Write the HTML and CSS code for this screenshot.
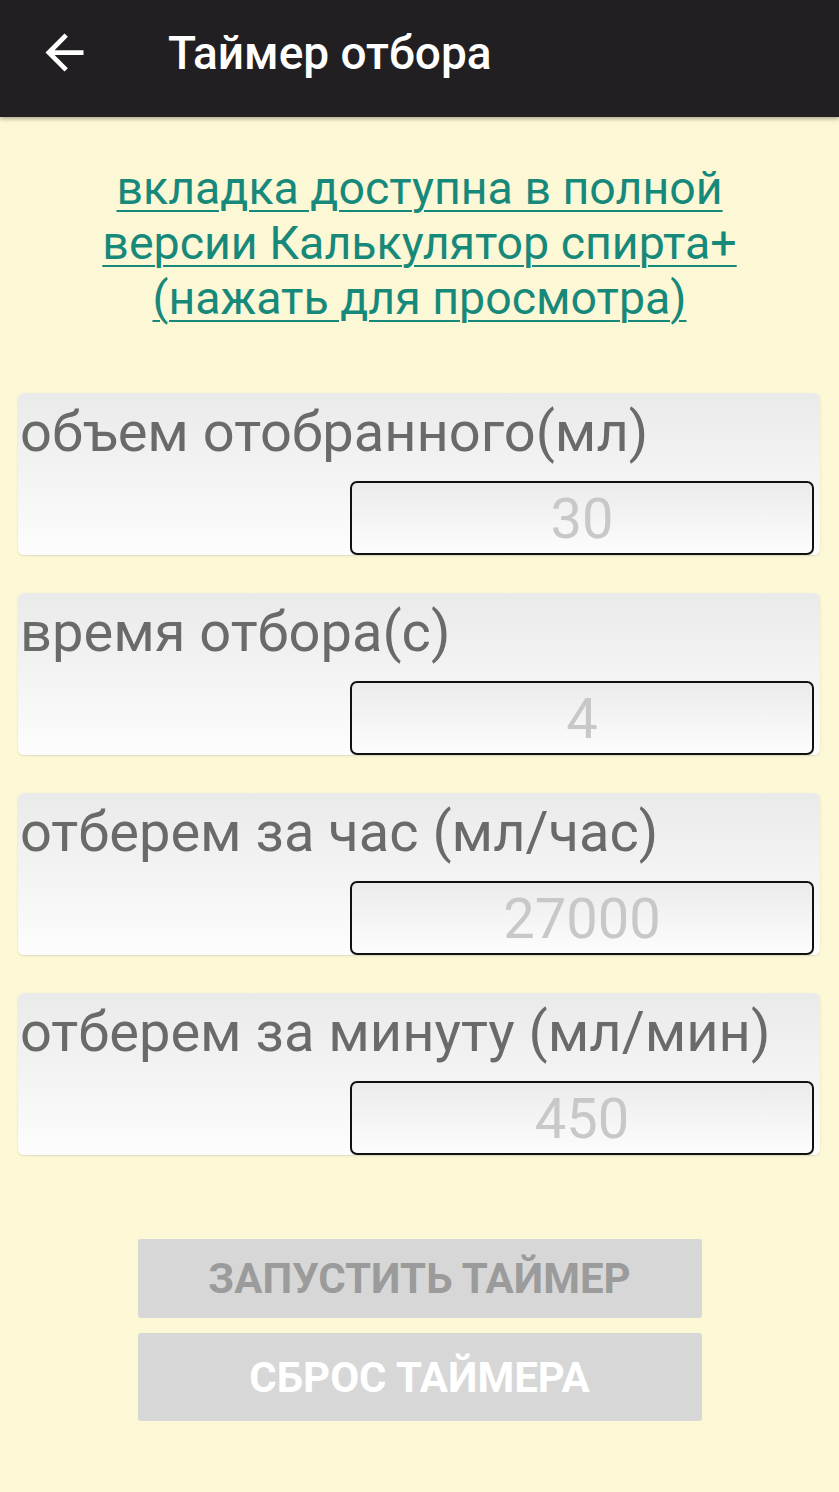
FILE: index.html
```html
<!DOCTYPE html>
<html lang="ru">
<head>
  <meta charset="UTF-8">
  <title>Таймер отбора</title>
  <meta name="viewport" content="width=device-width, initial-scale=1.0">
  <link rel="stylesheet" href="styles.css">
</head>
<body>
  <!-- Верхняя панель -->
  <header class="toolbar">
    <svg class="back" viewBox="0 0 24 24" width="57" height="57">
      <path d="M20 11H7.83l5.59-5.59L12 4l-8 8 8 8 1.41-1.41L7.83 13H20v-2z" fill="#fff"/>
    </svg>
    <h1>Таймер отбора</h1>
  </header>

  <a class="promo" href="#">вкладка доступна в полной<br>версии Калькулятор спирта+<br>(нажать для просмотра)</a>

  <!-- Поля -->
  <div class="fields">
    <div class="card">
      <label>объем отобранного(мл)</label>
      <div class="value">30</div>
    </div>
    <div class="card">
      <label>время отбора(с)</label>
      <div class="value">4</div>
    </div>
    <div class="card">
      <label>отберем за час (мл/час)</label>
      <div class="value">27000</div>
    </div>
    <div class="card">
      <label>отберем за минуту (мл/мин)</label>
      <div class="value">450</div>
    </div>
  </div>

  <div class="buttons">
    <button class="btn start">Запустить таймер</button>
    <button class="btn reset">Сброс таймера</button>
  </div>
</body>
</html>
```

FILE: styles.css
```css
body {
  margin: 0;
  font-family: Roboto, 'Noto Sans', sans-serif;
  background-color: #fcf7d4;
  min-height: 1492px;
}

.toolbar {
  height: 117px;
  box-sizing: border-box;
  padding-bottom: 12px;
  background-color: #211f21;
  display: flex;
  align-items: center;
  box-shadow: 0 2px 4px rgba(0, 0, 0, 0.3);
}

.back {
  margin-left: 36px;
}

.toolbar h1 {
  margin: 0 0 0 75px;
  color: #fff;
  font-size: 46px;
  font-weight: 500;
}

.promo {
  display: block;
  padding-top: 44px;
  text-align: center;
  font-size: 46.5px;
  line-height: 55px;
  color: #17897a;
  text-decoration: underline;
  text-decoration-thickness: 2px;
  text-underline-offset: 6px;
}

.fields {
  margin-top: 67px;
  padding: 0 19px 0 18px;
  display: flex;
  flex-direction: column;
  gap: 38px;
}

.card {
  height: 162px;
  box-sizing: border-box;
  border-radius: 6px;
  background: linear-gradient(#eaeaea, #fdfdfd);
  box-shadow: 0 1px 2px rgba(0, 0, 0, 0.12);
  display: flex;
  flex-direction: column;
}

.card label {
  padding: 5px 0 0 2px;
  font-size: 56px;
  line-height: 68px;
  color: #6a6a6a;
}

.value {
  margin: 15px 6px 0 auto;
  width: 464px;
  height: 74px;
  box-sizing: border-box;
  border: 2px solid #111;
  border-radius: 7px;
  background: linear-gradient(#ebebeb, #fdfdfd);
  text-align: center;
  font-size: 56px;
  line-height: 64px;
  padding-top: 4px;
  color: #c8c8c8;
}

.buttons {
  margin: 84px auto 0;
  width: 564px;
  display: flex;
  flex-direction: column;
  gap: 15px;
}

.btn {
  border: none;
  border-radius: 3px;
  background-color: #d7d7d7;
  font-family: Roboto, sans-serif;
  font-weight: 700;
  font-size: 42px;
  text-transform: uppercase;
}

.start {
  height: 79px;
  color: #9b9b9b;
}

.reset {
  height: 88px;
  color: #fff;
}
```
